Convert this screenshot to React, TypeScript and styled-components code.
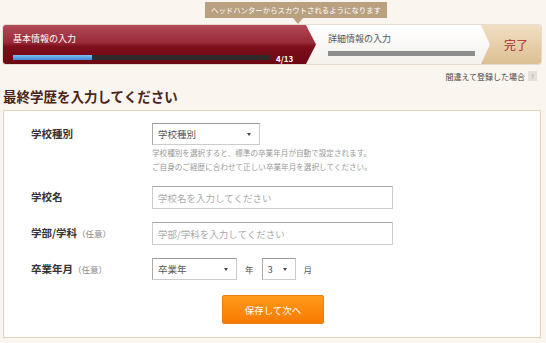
import React from 'react';
import styled, { createGlobalStyle } from 'styled-components';

const GlobalStyle = createGlobalStyle`
  html, body {
    margin: 0;
    padding: 0;
    background: #faf6ef;
    font-family: "Noto Sans CJK JP", "Noto Sans", sans-serif;
    color: #3a2a20;
  }
`;

const Page = styled.div`
  width: 546px;
  height: 343px;
  box-sizing: border-box;
  padding: 2px 5px 0 3px;
  overflow: hidden;
`;

const TipRow = styled.div`
  display: flex;
  padding-left: 202px;
  height: 23px;
`;

const Tip = styled.div`
  position: relative;
  height: 16px;
  padding: 0 6px;
  background: #b9a080;
  color: #fff;
  font-size: 7.4px;
  line-height: 16px;

  &::after {
    content: '';
    position: absolute;
    left: 88px;
    top: 16px;
    border-left: 5px solid transparent;
    border-right: 5px solid transparent;
    border-top: 6px solid #b9a080;
  }
`;

const Steps = styled.div`
  display: flex;
  height: 39px;
  border-radius: 3px;
  overflow: hidden;
  background: linear-gradient(#ffffff, #f4f1ec);
  box-shadow: 0 0 0 1px #e6ddd0;
`;

const CurrentStep = styled.div`
  width: 313px;
  flex: none;
  box-sizing: border-box;
  padding: 8px 0 0 10px;
  background: linear-gradient(#b24a58 0%, #9a2a38 45%, #7e0f1c 55%, #6a0812 100%);
  clip-path: polygon(0 0, calc(100% - 10px) 0, 100% 50%, calc(100% - 10px) 100%, 0 100%);
  color: #fff;
`;

const NextStep = styled.div`
  flex: 1;
  padding: 8px 8px 0 12px;
  color: #555;
`;

const DoneStep = styled.div`
  width: 62px;
  flex: none;
  display: flex;
  align-items: center;
  justify-content: center;
  padding-left: 8px;
  box-sizing: border-box;
  margin-left: -2px;
  background: linear-gradient(#f1dfc2, #dcbf94);
  clip-path: polygon(0 0, 100% 0, 100% 100%, 0 100%, 9px 50%);
  color: #ad2a2e;
  font-size: 12px;
`;

const StepTitle = styled.div`
  font-size: 9px;
  line-height: 12px;
`;

const BarRow = styled.div`
  display: flex;
  align-items: center;
  gap: 6px;
  margin-top: 6px;
`;

const Track = styled.div<{ $dark?: boolean }>`
  width: ${p => (p.$dark ? '257px' : '147px')};
  height: 5px;
  background: ${p => (p.$dark ? '#2e2a2a' : '#8f8f8f')};
  display: flex;
`;

const Fill = styled.div`
  height: 100%;
  background: linear-gradient(#7cc0f0, #3e8ad0);
`;

const Count = styled.span`
  font-size: 8px;
  font-weight: 700;
  margin-top: 2px;
`;

const HelpRow = styled.div`
  display: flex;
  justify-content: flex-end;
  align-items: center;
  gap: 3px;
  height: 18px;
  margin-top: 3px;
  padding-right: 4px;
  font-size: 8px;
  color: #444;
`;

const Q = styled.span`
  width: 9px;
  height: 10px;
  background: #e5e0d8;
  color: #999;
  font-size: 6px;
  display: flex;
  align-items: center;
  justify-content: center;
`;

const Heading = styled.h1`
  margin: 0;
  font-size: 13.5px;
  font-weight: 700;
  color: #4a2418;
  line-height: 22px;
  height: 25px;
`;

const Panel = styled.div`
  background: #fff;
  border: 1px solid #e8d2bc;
  height: 228px;
  box-sizing: border-box;
  padding: 12px 0 0 27px;
`;

const Row = styled.div<{ $gap: number }>`
  display: flex;
  margin-bottom: ${p => p.$gap}px;
`;

const Label = styled.div`
  width: 121px;
  flex: none;
  font-size: 10.5px;
  font-weight: 700;
  color: #333;
  line-height: 22px;
`;

const Opt = styled.span`
  font-weight: 400;
  color: #888;
  font-size: 8.5px;
`;

const Field = styled.div`
  display: flex;
  flex-direction: column;
`;

const Inline = styled.div`
  display: flex;
  align-items: center;
  gap: 8px;
  font-size: 8.5px;
  color: #555;
`;

const Select = styled.div<{ $w: number }>`
  width: ${p => p.$w}px;
  height: 22px;
  box-sizing: border-box;
  border: 1px solid #ccc;
  border-top-color: #999;
  border-left-color: #aaa;
  display: flex;
  align-items: center;
  justify-content: space-between;
  padding: 0 8px 0 5px;
  font-size: 9.5px;
  color: #555;

  &::after {
    content: '';
    border-left: 2px solid transparent;
    border-right: 2px solid transparent;
    border-top: 3px solid #444;
  }
`;

const Input = styled.div`
  width: 241px;
  height: 23px;
  box-sizing: border-box;
  border: 1px solid #ccc;
  border-top-color: #aaa;
  display: flex;
  align-items: center;
  padding-left: 5px;
  font-size: 9.5px;
  color: #aaa;
`;

const Note = styled.div`
  font-size: 7.6px;
  color: #999;
  line-height: 14px;
  margin-top: 1px;
`;

const Save = styled.button`
  display: block;
  margin: 0 0 0 191px;
  width: 102px;
  height: 29px;
  border: 1px solid #e88010;
  border-radius: 2px;
  background: linear-gradient(#ff9a1a, #f77a00);
  color: #fff;
  font-family: inherit;
  font-size: 9.5px;
`;

export default function App() {
  return (
    <Page>
      <GlobalStyle />
      <TipRow>
        <Tip>ヘッドハンターからスカウトされるようになります</Tip>
      </TipRow>
      <Steps>
        <CurrentStep>
          <StepTitle>基本情報の入力</StepTitle>
          <BarRow>
            <Track $dark>
              <Fill style={{ width: `${(4 / 13) * 100}%` }} />
            </Track>
            <Count>4/13</Count>
          </BarRow>
        </CurrentStep>
        <NextStep>
          <StepTitle>詳細情報の入力</StepTitle>
          <BarRow>
            <Track />
          </BarRow>
        </NextStep>
        <DoneStep>完了</DoneStep>
      </Steps>
      <HelpRow>
        間違えて登録した場合<Q>?</Q>
      </HelpRow>
      <Heading>最終学歴を入力してください</Heading>
      <Panel>
        <Row $gap={12}>
          <Label>学校種別</Label>
          <Field>
            <Select $w={108}>学校種別</Select>
            <Note>
              学校種別を選択すると、標準の卒業年月が自動で設定されます。
              <br />
              ご自身のご経歴に合わせて正しい卒業年月を選択してください。
            </Note>
          </Field>
        </Row>
        <Row $gap={13}>
          <Label>学校名</Label>
          <Input>学校名を入力してください</Input>
        </Row>
        <Row $gap={13}>
          <Label>学部/学科<Opt>（任意）</Opt></Label>
          <Input>学部/学科を入力してください</Input>
        </Row>
        <Row $gap={15}>
          <Label>卒業年月<Opt>（任意）</Opt></Label>
          <Inline>
            <Select $w={85}>卒業年</Select>
            <span>年</span>
            <Select $w={34}>3</Select>
            <span>月</span>
          </Inline>
        </Row>
        <Save>保存して次へ</Save>
      </Panel>
    </Page>
  );
}
